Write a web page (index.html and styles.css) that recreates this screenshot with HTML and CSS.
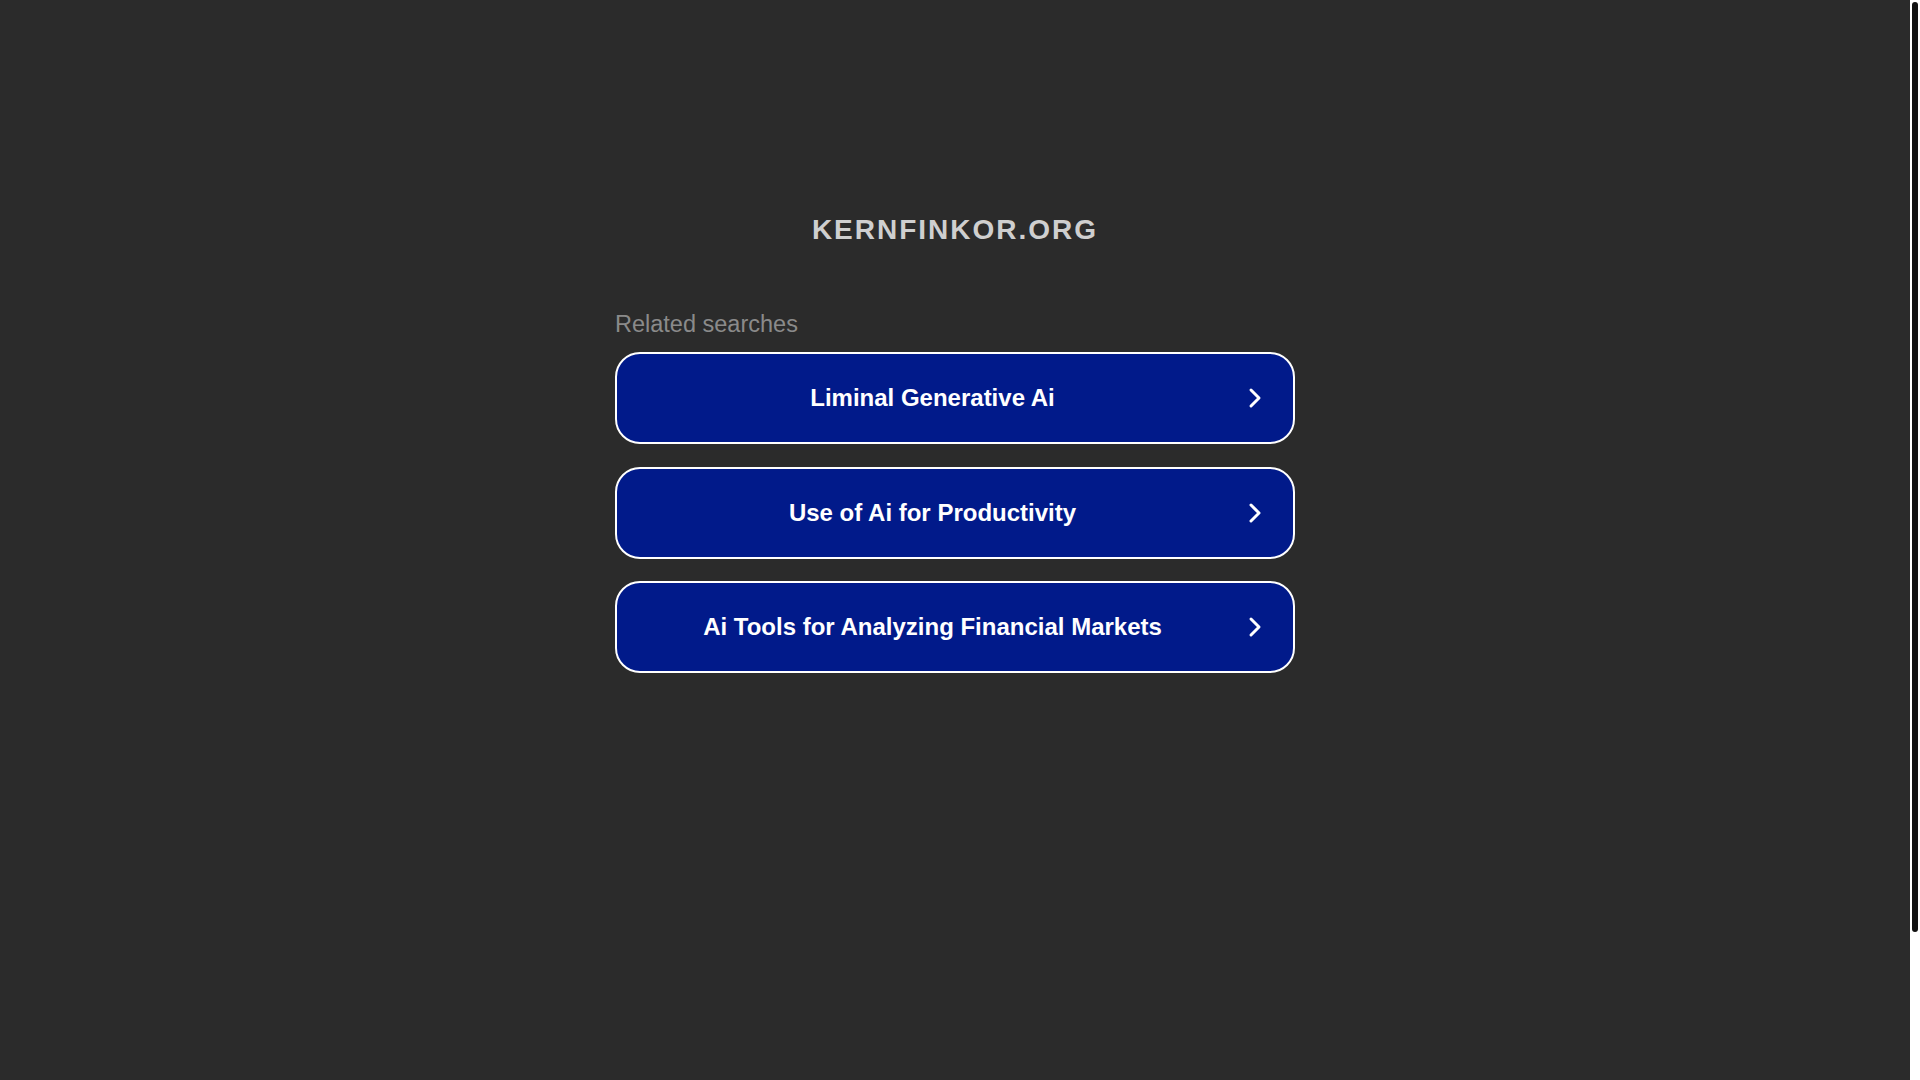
FILE: index.html
```html
<!DOCTYPE html>
<html lang="en">
<head>
  <meta charset="UTF-8">
  <meta name="viewport" content="width=device-width, initial-scale=1.0">
  <title>kernfinkor.org</title>
  <link rel="stylesheet" href="styles.css">
</head>
<body>
  <main class="page">
    <h1 class="domain">kernfinkor.org</h1>
    <p class="related">Related searches</p>
    <ul class="searches">
      <li>
        <a class="search" href="#">
          <span class="label">Liminal Generative Ai</span>
          <svg class="chevron" viewBox="0 0 14 22" width="14" height="22"><polyline points="3,3 11,11 3,19"/></svg>
        </a>
      </li>
      <li>
        <a class="search" href="#">
          <span class="label">Use of Ai for Productivity</span>
          <svg class="chevron" viewBox="0 0 14 22" width="14" height="22"><polyline points="3,3 11,11 3,19"/></svg>
        </a>
      </li>
      <li>
        <a class="search" href="#">
          <span class="label">Ai Tools for Analyzing Financial Markets</span>
          <svg class="chevron" viewBox="0 0 14 22" width="14" height="22"><polyline points="3,3 11,11 3,19"/></svg>
        </a>
      </li>
    </ul>
  </main>
  <!-- page scrollbar, drawn as its own column -->
  <div class="scrollbar"><div class="thumb"></div></div>
</body>
</html>
```

FILE: styles.css
```css
body {
  margin: 0;
  height: 100vh;
  overflow: hidden;
  display: flex;
  background: #2b2b2b;
  font-family: "Liberation Sans", Arial, sans-serif;
}
.page {
  flex: 1;
  display: flex;
  flex-direction: column;
  align-items: center;
  padding-top: 213px;
}
.domain {
  margin: 0;
  text-align: center;
  font-size: 28px;
  line-height: 34px;
  letter-spacing: 2px;
  text-transform: uppercase;
  color: #cfcfcf;
}
.related {
  width: 680px;
  margin: 63px 0 14px;
  font-size: 23.5px;
  line-height: 28px;
  color: #8a8a8a;
}
.searches {
  width: 680px;
  list-style: none;
  margin: 0;
  padding: 0;
}
.searches li {
  margin-bottom: 22.5px;
}
.search {
  display: flex;
  align-items: center;
  height: 92px;
  box-sizing: border-box;
  padding: 0 31px 0 0;
  border: 2px solid #fff;
  border-radius: 25px;
  background: #011a8a;
  color: #fff;
  text-decoration: none;
}
.label {
  flex: 1;
  text-align: center;
  font-size: 24px;
  font-weight: bold;
}
.chevron {
  fill: none;
  stroke: #fff;
  stroke-width: 3;
  stroke-linecap: round;
  stroke-linejoin: round;
}
.scrollbar {
  width: 10px;
  background: #fff;
}
.thumb {
  height: 930px;
  margin: 2px;
  border-radius: 3px;
  background: #111;
}
```
